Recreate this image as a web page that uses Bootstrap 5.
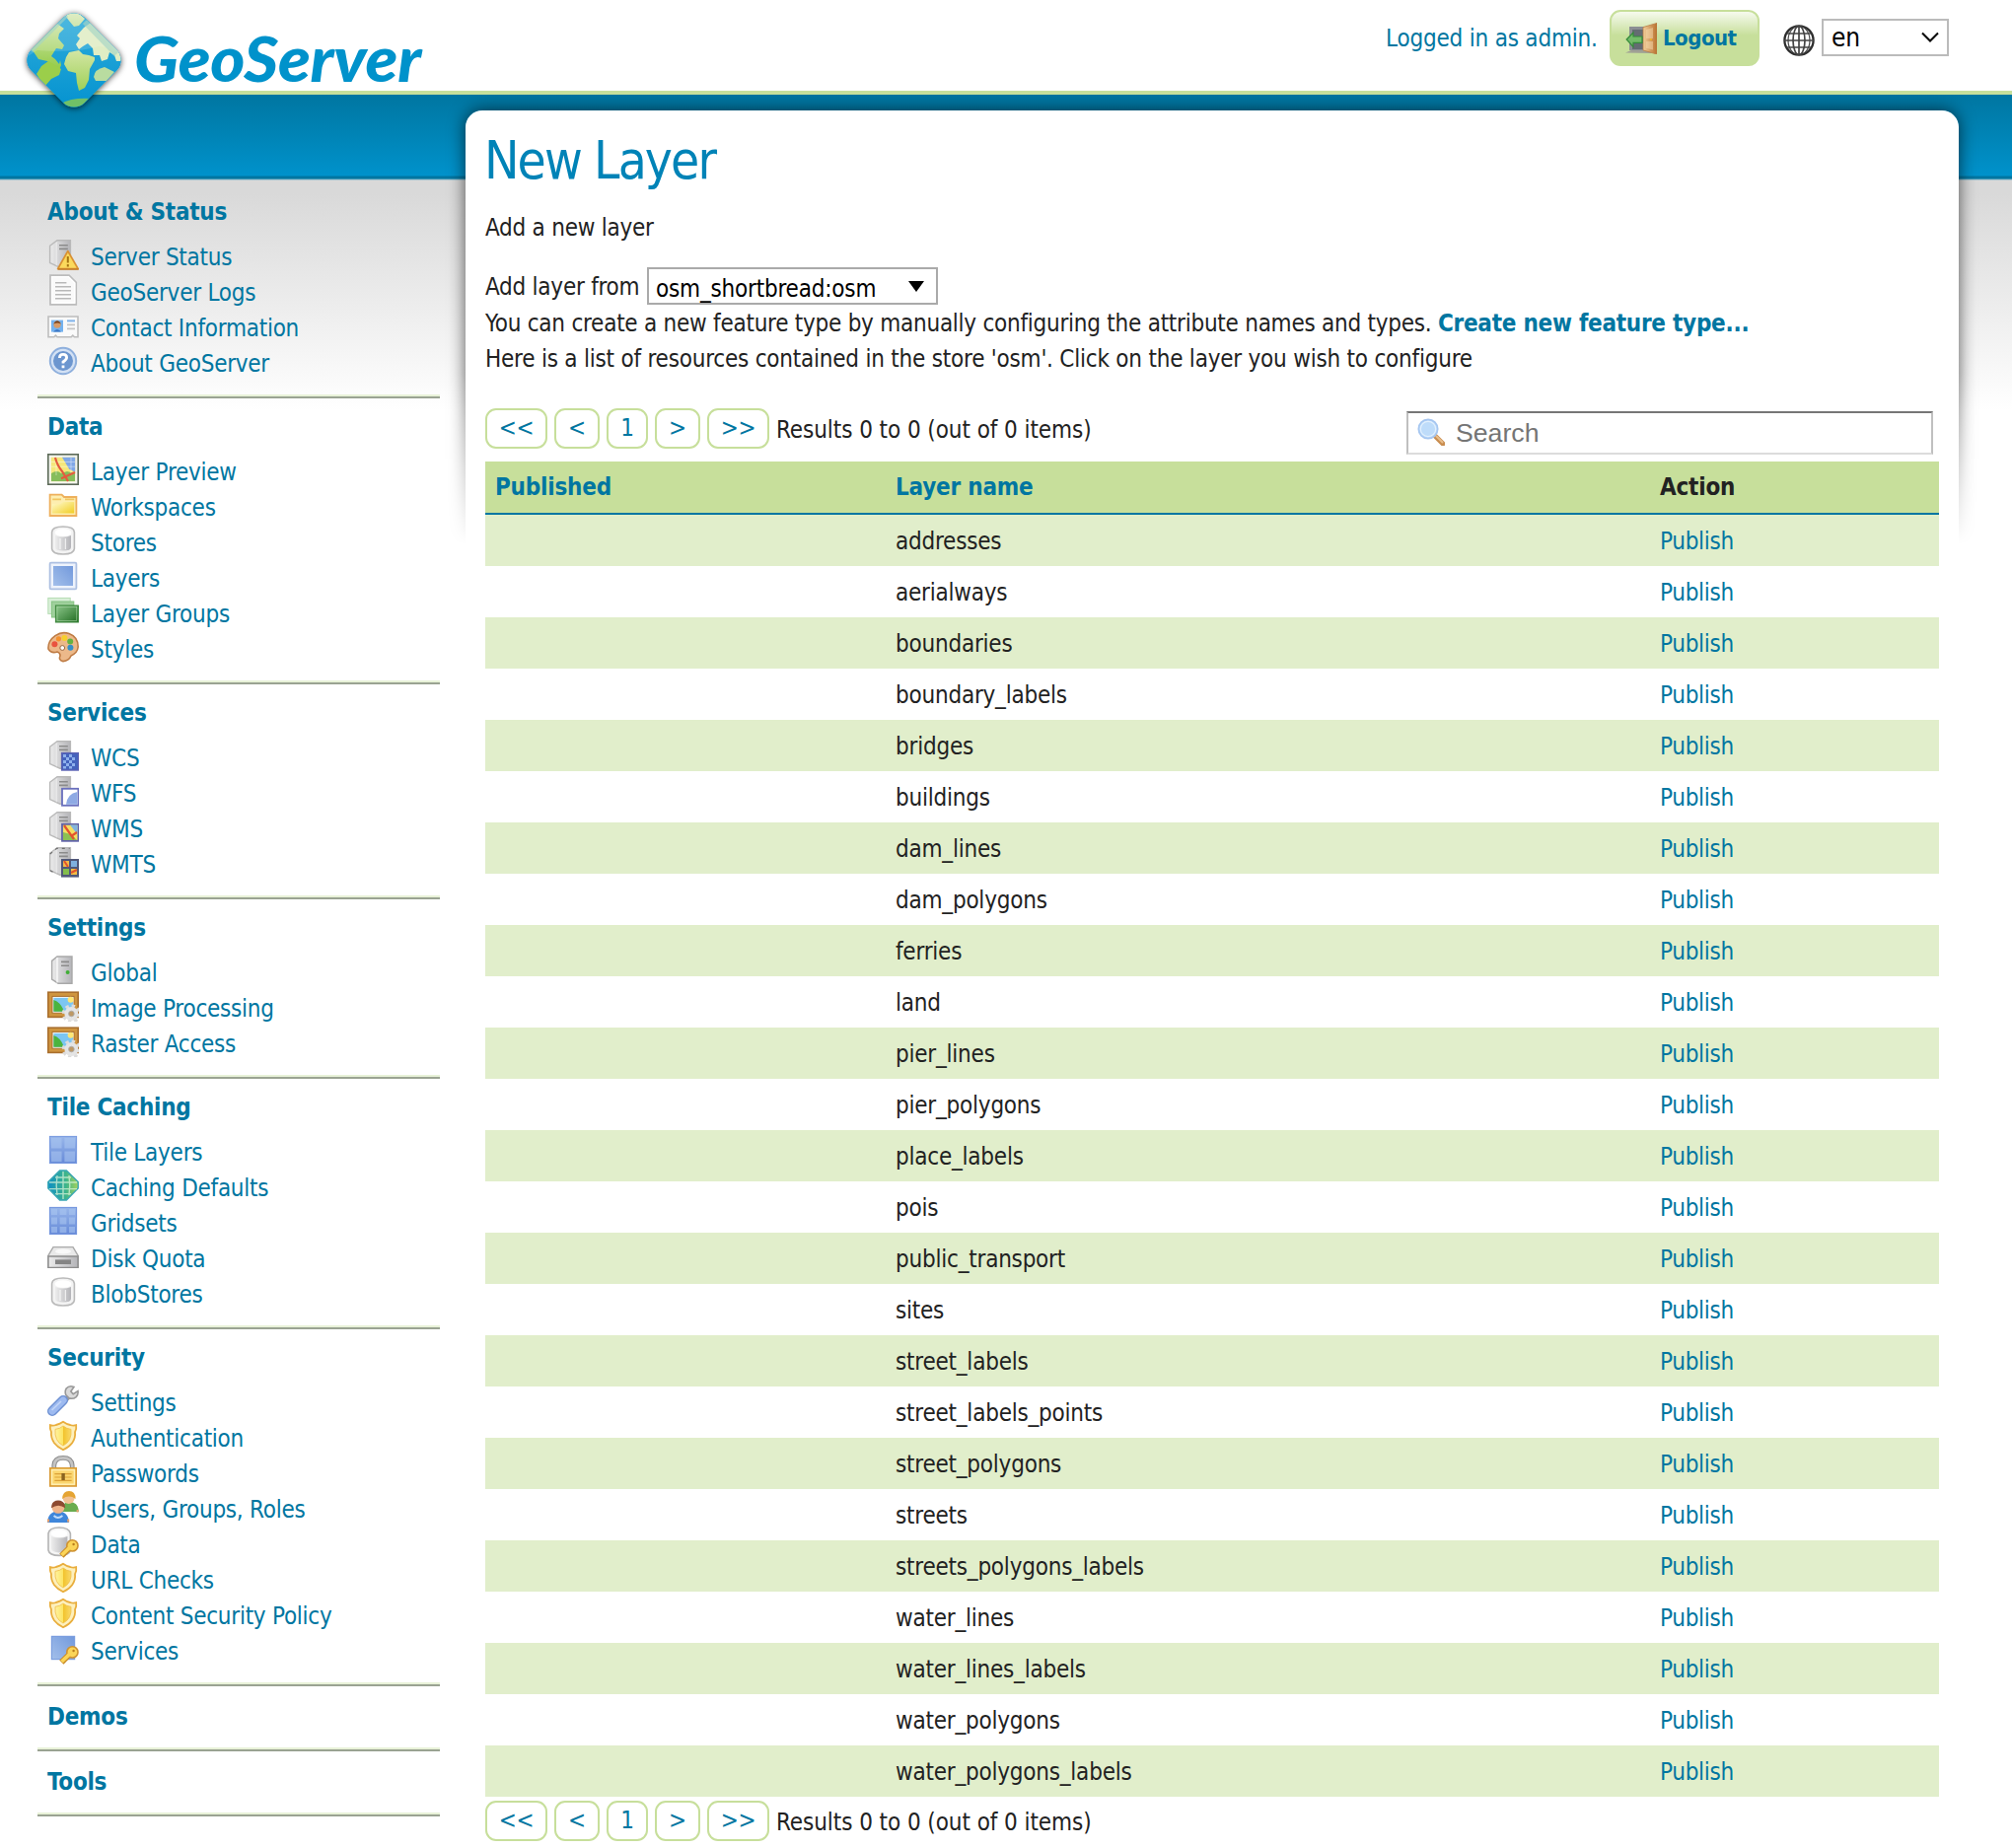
<!DOCTYPE html>
<html lang="en">
<head>
<meta charset="utf-8">
<title>GeoServer: New Layer</title>
<link href="https://cdn.jsdelivr.net/npm/bootstrap@5.3.0/dist/css/bootstrap.min.css" rel="stylesheet">
<style>
:root{--blue:#0076a1;--green:#c7df9b;--pale:#e1eecb}
body{font-family:"DejaVu Sans Condensed","DejaVu Sans",sans-serif;font-stretch:condensed;font-size:24px;line-height:36px;color:#222;background:#fff;letter-spacing:-.25px}
a{color:var(--blue);text-decoration:none}
a:hover{text-decoration:underline}
.top-bar{height:96px;border-bottom:4px solid var(--green)}
.logo{width:450px;height:120px;margin-bottom:-28px;position:relative;z-index:2}
.session{padding:10px 64px 0 0}
.who{width:227px;padding-top:11px;letter-spacing:-.2px}
.btn-logout{height:57px;width:152px;border:2px solid var(--green);border-radius:11px;background:linear-gradient(#f6faee,#c7df9b 45%);color:var(--blue);font-weight:700;font-size:22px;padding:0 0 0 14px;line-height:36px;letter-spacing:-.5px}
.btn-logout svg{margin-right:6px}
.globe{margin:15px 7px 0 24px}
.lang{width:129px;height:38px;border:2px solid #bbb;color:#000;padding:0 7px 0 8px;margin-top:9px;font-size:26px}
.store-row{height:39px}
.store-row>span{padding-top:2px;width:164px}
.store-pick{width:295px;height:38px;border:2px solid #aaa;color:#000;padding:2px 12px 0 7px;letter-spacing:-.2px}
.store-pick svg{margin-top:10px}
.stage{background:linear-gradient(#0076a1,#0092cb 82px,#0076a1 83px,#0076a1 85px,#7db4c9 86px,#d9d9d9 87px,#d9d9d9 100px,#fff 320px)}
.side{width:472px;padding:90px 26px 0 38px}
.side section{border-bottom:2px solid #9aa392;box-shadow:inset 0 -2px #e8f2d8;padding-bottom:15px}
.side h2{font-size:24px;line-height:36px;font-weight:700;color:var(--blue);margin:0;padding:11px 0 2px 10px;letter-spacing:-.25px}
.side h2:only-child{padding:13px 0 0 10px}
.side ul{margin:8px 0 0;padding:0 0 0 10px}
.side li{height:36px}
.side a{display:flex}
.side svg{width:32px;height:32px;margin:-1px 12px 0 0;flex:none}
.sheet{width:1514px;margin-top:16px;position:relative;padding:19px 20px 0}
.shade{position:absolute;inset:-16px -30px auto -30px;height:470px;overflow:hidden;-webkit-mask-image:linear-gradient(#000 60%,transparent 97%);mask-image:linear-gradient(#000 60%,transparent 97%)}
.shade::before{content:"";position:absolute;inset:16px 30px -40px;border-radius:17px;box-shadow:0 0 17px rgba(0,0,0,.65)}
.paper{position:absolute;inset:0;background:#fff;border-radius:17px 17px 0 0}
.inner{position:relative}
h1{font-size:52.8px;line-height:63px;color:#0083b7;font-weight:400;margin:0 0 19px -1px;letter-spacing:-1.9px}
.intro{margin:0 0 22px}
.hint{letter-spacing:-.22px}
.tools-row{height:54px;margin-top:32px}
.pager{height:41px}
.pager a{border:2px solid var(--green);border-radius:11px;height:41px;line-height:37px;text-align:center;margin-right:7px;background:#fff}
.pager .w63{width:63px}.pager .w46{width:46px}.pager .w42{width:42px}
.pager span{padding:4px 0 0;height:41px;letter-spacing:-.07px}
.find{width:534px;height:44px;border:2px solid;border-color:#767676 #c0c0c0 #dcdcdc;margin:3px 6px 0 0;color:#757575;font:26.67px/36px "Liberation Sans",sans-serif;padding:2px 9px;letter-spacing:0}
.find svg{margin:3px 11px 0 0}
.layers{width:1474px;table-layout:fixed;margin:0;border-collapse:separate;border-spacing:0}
.layers th,.layers td{height:52px;padding:2px 10px 0!important;border:0;line-height:36px;vertical-align:middle;color:#222;box-shadow:none!important}
.layers th{background:var(--green)!important;letter-spacing:-.2px}
.layers thead th{height:54px;border-bottom:2px solid var(--blue);padding-top:0!important}
.layers tbody tr:nth-child(odd) td{background:var(--pale)}
.layers tbody td{letter-spacing:-.22px}
.layers tbody td a{letter-spacing:-.3px}
</style>
<script src="https://cdn.jsdelivr.net/npm/bootstrap@5.3.0/dist/js/bootstrap.bundle.min.js"></script>
</head>
<body>
<svg width="0" height="0" class="position-absolute">
<defs>
<linearGradient id="gMetal"><stop offset="0" stop-color="#ececec"/><stop offset="1" stop-color="#b4b4b8"/></linearGradient>
<linearGradient id="gBlue" x1="1" y1="0" x2="0" y2="1"><stop offset="0" stop-color="#7299dc"/><stop offset="1" stop-color="#a3bfea"/></linearGradient>
<linearGradient id="gTile" x2="0" y2="1"><stop offset="0" stop-color="#98b6ea"/><stop offset="1" stop-color="#668ad8"/></linearGradient>
<linearGradient id="gGold"><stop offset="0" stop-color="#fff3a0"/><stop offset=".5" stop-color="#fce463"/><stop offset=".52" stop-color="#f2c32e"/><stop offset="1" stop-color="#f9d968"/></linearGradient>
<linearGradient id="gFold" x2="1" y2="1"><stop offset="0" stop-color="#fffbd0"/><stop offset="1" stop-color="#f1cd21"/></linearGradient>
<linearGradient id="gGreen" x2="1" y2="1"><stop offset="0" stop-color="#8fc98d"/><stop offset="1" stop-color="#1f6b20"/></linearGradient>
<linearGradient id="gGem"><stop offset="0" stop-color="#0d8fc4"/><stop offset=".6" stop-color="#3fb58a"/><stop offset="1" stop-color="#a6d35a"/></linearGradient>
<linearGradient id="gSea" x2="0" y2="1"><stop offset="0" stop-color="#35b0dc"/><stop offset="1" stop-color="#0090cf"/></linearGradient>
<linearGradient id="gLand" x2="0" y2="1"><stop offset="0" stop-color="#dcebbf"/><stop offset="1" stop-color="#93cb48"/></linearGradient>
<linearGradient id="gAfr" x2="0" y2="1"><stop offset="0" stop-color="#d3e6a4"/><stop offset="1" stop-color="#9fd058"/></linearGradient>
<linearGradient id="gDoor"><stop offset="0" stop-color="#f3cf9c"/><stop offset="1" stop-color="#b8702e"/></linearGradient>
<symbol id="srv" viewBox="0 0 16 16"><path d="M1.300 3.600 5 .9h6.700v13.700H6.400L1.300 12.300z" fill="url(#gMetal)" stroke="#b9b9b9" stroke-width=".7"/><path d="M4.600 1.700v12" stroke="#f6f6f6" stroke-width=".5" fill="none" opacity=".7"/><path d="M6 3.400h4.400M6 5.200h4.400" stroke="#8b8b8b" stroke-width=".8"/></symbol>
<symbol id="i-status" viewBox="0 0 16 16"><use href="#srv"/><path d="M10.400 6.300 15.600 15.300H5.300z" fill="#fbd95c" stroke="#d99134" stroke-width=".9" stroke-linejoin="round"/><path d="M5.400 15.500h10.400" stroke="#c27a28" stroke-width=".7"/><path d="M10.400 9v3.200M10.400 13v1.200" stroke="#a77513" stroke-width="1"/></symbol>
<symbol id="i-log" viewBox="0 0 16 16"><path d="M1.500.6H11l3.600 3.600v11.200H1.500z" fill="#fafafa" stroke="#bcbcbc" stroke-width=".9"/><path d="M2.300 1.300h8.400l3.200 3.200v10H2.300z" fill="none" stroke="#fff" stroke-width=".7"/><path d="M4 4.400h5.700M4 6.400h8M4 8.400h8M4 10.400h8M4 12.400h8" stroke="#b9b9b9" stroke-width=".8"/></symbol>
<symbol id="i-card" viewBox="0 0 16 16"><path d="M.5 3.500h15v10.400h-1.800l-.8-.8-.8.800H5l-.8-.8-.8.800H.5z" fill="#fafafa" stroke="#bdbdbd" stroke-width=".8"/><rect x="2" y="5.300" width="6" height="6" fill="#74b2ef"/><circle cx="5" cy="7.600" r="1.800" fill="#d89c68"/><path d="M3.100 7.300q1.900-3.400 3.900 0-1.900-1.200-3.900 0z" fill="#7a431d"/><path d="M3 11.300q2-2.600 4 0z" fill="#3d78c6"/><path d="M10 5.700h4" stroke="#7fb3ea" stroke-width="1"/><path d="M10 7.700h4M10 9.700h4" stroke="#c4c4c4" stroke-width=".8"/></symbol>
<symbol id="i-help" viewBox="0 0 16 16"><circle cx="8" cy="8" r="6.600" fill="#d3e1f4" stroke="#8fb0dd" stroke-width="1"/><circle cx="8" cy="8" r="5" fill="#6c96cf"/><path d="M6.200 6.500Q6.200 4.700 8 4.700t1.800 1.600Q9.800 7.300 8 8.500v.8M8 10.300v1.300" stroke="#fff" stroke-width="1.400" fill="none"/></symbol>
<symbol id="i-map" viewBox="0 0 16 16"><rect x=".4" y=".4" width="15.200" height="15.200" fill="#f4f5ee" stroke="#5d6b59" stroke-width=".8"/><rect x="1.900" y="1.900" width="12.200" height="12.200" fill="#f5e77a"/><path d="M7.500 1.900h6.600v7.500l-3-1.500z" fill="#7fa7e6"/><path d="M2 10q3-2 5 0l3-1 4 1v4H2z" fill="#87bd5b"/><path d="M2 4.200h12M2 6.600h12M4.500 2v9M12 2v9" stroke="#fff" stroke-width=".3" opacity=".7"/><path d="M4 2q1 4 3.500 7l3 5M7 12.600 14 9.500" stroke="#e35b3e" stroke-width="1.100" fill="none"/></symbol>
<symbol id="i-folder" viewBox="0 0 16 16"><path d="M1.300 13.500V2.800h6L8.500 4h6.200v9.500z" fill="#fdeeb0" stroke="#eeb05c" stroke-width=".9"/><path d="M2.500 12.300V7.600h4L8 6.500h5.600v5.800z" fill="url(#gFold)"/><path d="M2.600 5.200H7M9 5.200h4.600" stroke="#f2c660" stroke-width=".8"/></symbol>
<symbol id="i-cyl" viewBox="0 0 16 16"><path d="M2.300 3.800Q2.500 1 8 1t5.700 2.800v8.400Q13.500 15 8 15t-5.700-2.800z" fill="#f3f3f3" stroke="#b9b9b9" stroke-width=".8"/><path d="M4 5.500v6q0 1.800 4 1.800t4-1.800v-6q-4 1.600-8 0z" fill="url(#gMetal)"/><ellipse cx="8" cy="4" rx="4.200" ry="1.900" fill="#fff"/><path d="M6.500 7v5.500M9.200 7v5.500" stroke="#fff" stroke-width=".6" opacity=".7"/></symbol>
<symbol id="i-layer" viewBox="0 0 16 16"><rect x="1.300" y="1.300" width="13.400" height="13.400" rx=".6" fill="#eef3fc" stroke="#adc0e2" stroke-width=".9"/><rect x="3" y="3" width="10" height="10" fill="url(#gBlue)"/></symbol>
<symbol id="i-group" viewBox="0 0 16 16"><rect x=".4" y="1.200" width="11.200" height="8" fill="#d9efd8" stroke="#b5dcb3" stroke-width=".5"/><rect x="2.200" y="3" width="11.200" height="8" fill="#9fd09c" stroke="#84c281" stroke-width=".5"/><rect x="4.200" y="5" width="11.500" height="8.500" fill="url(#gGreen)" stroke="#3b853a" stroke-width=".5"/><rect x="5" y="5.800" width="9.900" height="6.900" fill="none" stroke="#a7d5a4" stroke-width=".3"/></symbol>
<symbol id="i-palette" viewBox="0 0 16 16"><path d="M.5 9Q.2 5 4 2.300 7.500 0 11 1.300 15.600 3 15.600 8 15.300 11 12 12.500 11 15 8 15.300 5.500 14.800 6.500 12.500 6.600 11 5 10.500 2 11.500.5 9z" fill="#ecb98a" stroke="#bf7c45" stroke-width=".8"/><circle cx="3.700" cy="6.600" r="1.500" fill="#e9533f"/><circle cx="5.700" cy="3.900" r="1.300" fill="#f5912d"/><circle cx="8.700" cy="3.500" r="1.500" fill="#f6cf2d"/><circle cx="11.600" cy="5.200" r="1.500" fill="#66b33f"/><circle cx="11.700" cy="8.400" r="1.500" fill="#378fc5"/><circle cx="7.600" cy="8.500" r="1.200" fill="#fff" stroke="#9b6840" stroke-width=".5"/></symbol>
<symbol id="i-wcs" viewBox="0 0 16 16"><use href="#srv"/><rect x="7.300" y="6.800" width="8.500" height="8.700" fill="#4463bd" stroke="#5b62b4" stroke-width=".7"/><path d="M8 7.500h1.500V9H8zm3 0h1.500V9H11zM9.500 9H11v1.500H9.500zm3 0H14v1.500h-1.500zM8 10.500h1.500V12H8zm3 0h1.500V12H11zM9.500 12H11v1.500H9.500zm3 0H14v1.500h-1.500zM8 13.500h1.500v1.300H8zm3 0h1.500v1.300H11z" fill="#8fb1ec"/></symbol>
<symbol id="i-wfs" viewBox="0 0 16 16"><use href="#srv"/><rect x="7.500" y="6.900" width="8.200" height="8.500" fill="#fff" stroke="#6a70bd" stroke-width=".9"/><path d="M9.500 14.900Q10 9.500 15.200 8.500v6.400z" fill="#8eaae4"/></symbol>
<symbol id="i-wms" viewBox="0 0 16 16"><use href="#srv"/><rect x="7.500" y="6.900" width="8.200" height="8.500" fill="#f5df62" stroke="#5f62a8" stroke-width=".9"/><path d="M11.500 7.300h3.800v5z" fill="#82b4df"/><path d="M8 15v-4l4 1 3 3z" fill="#8cc152"/><path d="m8.500 7.500 5 7M12 13l3-2" stroke="#e2532d" stroke-width="1.100"/></symbol>
<symbol id="i-wmts" viewBox="0 0 16 16"><use href="#srv"/><path d="M1.400 4 4.800 1.200h6.500M1.400 12.400l3 1.500" fill="none" stroke="#6f6f6f" stroke-width=".6" stroke-dasharray="1.500 2"/><rect x="7" y="6.500" width="9" height="9.300" fill="#505779"/><path d="M8 7.500h3v3H8z" fill="#f3b94a"/><path d="M12 7.500h3v3h-3z" fill="#7fb0df"/><path d="M8 11.500h3v3H8z" fill="#83bd4c"/><path d="M12 11.500h3v3h-3z" fill="#f3bd43"/><path d="m8.500 7.500 2 3M12 13.500l3-1.500" stroke="#e2532d"/></symbol>
<symbol id="i-global" viewBox="0 0 16 16"><path d="M2.300 3.200 5 1h7.500v13.600H5.500l-3.200-2z" fill="url(#gMetal)" stroke="#a9a9a9" stroke-width=".7"/><path d="M5 1.500v12.700" stroke="#fff" stroke-width=".6"/><path d="M7 3.700h4M7 5.600h4" stroke="#8b8b8b" stroke-width=".8"/><circle cx="10.300" cy="9" r="1" fill="#3fae35"/></symbol>
<symbol id="i-image" viewBox="0 0 16 16"><rect x=".4" y="1.100" width="15.200" height="12.600" fill="#cf953f" stroke="#a96f2e" stroke-width=".8"/><rect x="2.500" y="3.200" width="11" height="8.400" fill="#fff" stroke="#a96f2e" stroke-width=".5"/><rect x="3.200" y="3.900" width="9.800" height="7" fill="#7cc6f2"/><path d="M3.200 5q3.500 1 5.300 5.900H3.200z" fill="#4bb43e"/><circle cx="11.800" cy="4.900" r="1.500" fill="#ffe775"/><circle cx="12.200" cy="12" r="4" fill="none" stroke="#dcdcdc" stroke-width="1.600" stroke-dasharray="1.700 1.440"/><circle cx="12.200" cy="12" r="3.500" fill="#e4e4e4"/><circle cx="12.200" cy="12" r="1.400" fill="#bd9865" stroke="#aaa" stroke-width=".4"/></symbol>
<symbol id="i-tile" viewBox="0 0 16 16"><rect x="1.200" y="1.200" width="13.600" height="13.600" fill="url(#gTile)" stroke="#7698df" stroke-width=".5"/><path d="M2 2h5.300v5.300H2zM8.700 2H14v5.300H8.700zM2 8.700h5.300V14H2zM8.700 8.700H14V14H8.700z" fill="#a9c5f0" opacity=".6"/></symbol>
<symbol id="i-gem" viewBox="0 0 16 16"><path d="M6.300.5h3.400L15.600 6.300v3.200L9.700 15.500H6.300L.4 9.500V6.300z" fill="url(#gGem)" stroke="#3aa7b4" stroke-width=".7"/><path d="M5 3Q4.200 8 5 13M8 1v14M11 3q.8 5 0 10M1 6.500h14M1 9.800h14M4 4h8M4 12.300h8" stroke="#d7f3d8" stroke-width=".7" fill="none" opacity=".75"/></symbol>
<symbol id="i-grid" viewBox="0 0 16 16"><rect x="1.200" y="1.200" width="13.600" height="13.600" fill="url(#gTile)" stroke="#6f93dd" stroke-width=".5"/><path d="M2 2h3v3H2zM6.300 2h3.400v3H6.300zM11 2h3v3h-3zM2 6.300h3v3.400H2zM6.300 6.300h3.400v3.400H6.300zM11 6.300h3v3.400h-3zM2 11h3v3H2zM6.300 11h3.400v3H6.300zM11 11h3v3h-3z" fill="#a9c5f0" opacity=".6"/></symbol>
<symbol id="i-disk" viewBox="0 0 16 16"><path d="M3 3.300h10l2.600 4.400v6H.4v-6z" fill="#e9e9e9" stroke="#aaa" stroke-width=".7"/><path d="M.5 8h15v5.700H.5z" fill="url(#gMetal)" stroke="#8d8d8d" stroke-width=".7"/><rect x="4" y="9.700" width="8" height="2.300" fill="#858585"/><ellipse cx="8" cy="5.500" rx="4" ry="1.300" fill="#f9f9f9"/></symbol>
<symbol id="i-wrench" viewBox="0 0 16 16"><path d="M8 9 11 6" stroke="#9b9b9b" stroke-width="2.600"/><path d="M13.500 1.200Q11 .3 9.600 2q-.9 1.500-.2 3.300l1.600 1.600q2 .7 3.600-.6 1.200-1.200.9-3l-2.400 1.500-1.200-1.300z" fill="#dadada" stroke="#999" stroke-width=".8"/><path d="M2.500 13.500 8 8" stroke="#6d90d2" stroke-width="5" stroke-linecap="round"/><path d="M2.500 13.500 8 8" stroke="#9dbaf0" stroke-width="3.600" stroke-linecap="round"/><path d="M2.300 13 7 8.500" stroke="#c3d6f7" stroke-width=".8"/></symbol>
<symbol id="i-shield" viewBox="0 0 16 16"><path d="M1.400 2.600q1.400.5 3-.1Q6.500 2 8 .9q1.700 1.200 3.600 1.600 1.600.5 3 .1.300 2-.6 3.500.4 3-1.400 5.500-1.500 2-4.600 3.500-3-1.500-4.500-3.500Q1.700 9 2 6.100 1.200 4.500 1.400 2.600z" fill="#fdf0bd" stroke="#e9ae3d" stroke-width=".9"/><path d="M4 4.700q2.500-.3 4-1.700 1.700 1.400 4 1.700.6 6-4 8.300-4.500-2.300-4-8.300z" fill="url(#gGold)" stroke="#f0bf4b" stroke-width=".4"/></symbol>
<symbol id="i-lock" viewBox="0 0 16 16"><path d="M3.400 7V5Q3.700 1.200 8 1.200T12.600 5v2" fill="none" stroke="#8f8f8f" stroke-width="2.400"/><path d="M3.400 7V5Q3.700 1.200 8 1.200T12.600 5v2" fill="none" stroke="#c4c4c4" stroke-width="1.300"/><rect x="1.400" y="6.400" width="13.200" height="9.100" fill="#fbd66f" stroke="#d99a35" stroke-width=".8"/><rect x="2.300" y="7.300" width="11.400" height="7.300" fill="none" stroke="#fff0b5" stroke-width=".7"/><path d="M3.700 9.300h8.600M3.700 11h8.600M3.700 12.700h8.600" stroke="#dba136" stroke-width=".6"/><rect x="7.200" y="9" width="1.700" height="3.500" fill="#8a6420"/></symbol>
<symbol id="i-users" viewBox="0 0 16 16"><path d="M7.200 10.500q.3-5 3.800-5 4.700 0 4.900 5z" fill="#69ac4f"/><circle cx="10.800" cy="3.500" r="3" fill="#f1c193"/><path d="M7.600 4Q7.700 0 11 0t3.300 4q-3.300-2.400-6.700 0z" fill="#e5a433"/><path d="M0 16Q.4 10.200 5.500 10.200T11 16z" fill="#3f86da"/><circle cx="5.500" cy="8.200" r="3.200" fill="#efb48a"/><path d="M2 8.600Q2.100 4.700 5.500 4.700T9.100 8.600q-3.500-2.500-7.100 0z" fill="#8d4a30"/><path d="M3.300 12.500q2 2 4.400 0" stroke="#c1dcfa" fill="none"/><path d="M.5 14.300v1.500M10.600 14.300v1.500M15.300 9.500v1.300" stroke="#e8a06c"/></symbol>
<symbol id="key" viewBox="0 0 16 16"><path d="M7.200 14.800 11 11" stroke="#c98b24" stroke-width="3"/><circle cx="12.700" cy="9.700" r="2.800" fill="#fbd558" stroke="#cf9230" stroke-width=".8"/><path d="M7.300 14.500 12 10" stroke="#fbd558" stroke-width="1.900"/><circle cx="13.300" cy="9" r=".6" fill="#b97c1d"/></symbol>
<symbol id="i-datakey" viewBox="0 0 16 16"><path d="M.5 3.500Q1 .5 6 .5t5.700 3v8.600Q11 14.700 6 14.700T.5 12z" fill="#f5f5f5" stroke="#b4b4b4" stroke-width=".8"/><path d="M2 5v6.300q.5 1.900 4 1.900t4.200-1.900V5q-4 1.600-8.200 0z" fill="url(#gMetal)"/><ellipse cx="6" cy="3.500" rx="4.200" ry="1.900" fill="#fff"/><use href="#key"/></symbol>
<symbol id="i-svckey" viewBox="0 0 16 16"><rect x="2.200" y="1.700" width="11.600" height="11.600" fill="url(#gBlue)" stroke="#7b9edf" stroke-width=".6"/><use href="#key"/></symbol>
</defs>
</svg>

<header class="top-bar d-flex justify-content-between align-items-start">
<svg class="logo" viewBox="0 0 450 120" role="img" aria-label="GeoServer">
<defs><clipPath id="gemClip"><rect x="37" y="23" width="76" height="76" rx="15" transform="rotate(45 75 61)"/></clipPath><filter id="soft" x="-20%" y="-20%" width="140%" height="140%"><feDropShadow dx="0" dy="1" stdDeviation="3" flood-opacity=".75"/></filter></defs>
<g filter="url(#soft)"><rect x="37" y="23" width="76" height="76" rx="15" transform="rotate(45 75 61)" fill="#0b9ad2"/></g>
<g clip-path="url(#gemClip)">
<path d="M20 0h110v120H20z" fill="url(#gSea)"/>
<path d="M68 12q10-2 18 7l-6 7-5 1-5-6-3-4zM30 50 58 24l7 5-5 5-1 5 6 7-2 4-6-1-5 8 4 3 4 5 1-4 1 5-2 5-5-3-7-6-9-2-6-9z" fill="url(#gLand)"/>
<path d="M49 62l7 4 6 4-2 6-8 4-7 8-8-13 5-8z" fill="#9bce4a"/>
<path d="M85 28l7-5 35 34-5 5-4 0-2-6-5-3-2 7-6 2-2-6-6 0-1-7-5-5-5 3-4 3-3-5 4-6-3-3z" fill="#e0edc4"/>
<path d="M70 53l10-2 4 4 6 1 6 2 0 3-5 9-1 11-4 8-6 3-2-8-1-10-8-2-4-7 2-7z" fill="url(#gAfr)"/>
<path d="M95 78q1-8 11-10l10 5-8 9-11 0z" fill="#b9dca0"/>
<path d="M62 105q10-6 30-5l-4 9H66z" fill="#71c067"/>
<path d="M20 62 75 8l55 54q-18-15-30-15-22 7-62 4z" fill="#fff" opacity=".14"/><path d="m31 51 36-36M118 55 86 22" stroke="#a5d4c5" stroke-width="6" opacity=".65"/>
</g>
<text x="136" y="83" textLength="291" lengthAdjust="spacingAndGlyphs" font-family="Lato,sans-serif" font-style="italic" font-weight="900" font-size="62" fill="#0092cb">GeoServer</text>
</svg>
<div class="session d-flex align-items-start">
<a href="#" class="who">Logged in as admin.</a>
<button class="btn btn-logout d-flex align-items-center"><svg width="32" height="32" viewBox="0 0 16 16"><path d="M2 2h8v12H2z" fill="#8b8e93"/><path d="M3.500 3.500h6v10h-6z" fill="#646b72"/><path d="M0 15.200 3 14h10v1.500z" fill="#a0a095"/><path d="M9 2.300 16 .2V16l-7-2z" fill="url(#gDoor)" stroke="#b97b42" stroke-width=".4"/><path d="m10.500 3.500 3.500-1v5.500h-3.500zM10.500 9.500H14v4.200l-3.500-.8z" fill="#f6d9ae" opacity=".5"/><circle cx="13" cy="8.500" r=".5" fill="#f5b61e"/><path d="M.6 8.500 4 5v2h4.500v3.200H4v2z" fill="#73ba69" stroke="#348a39" stroke-width=".6"/></svg>Logout</button>
<svg class="globe" width="32" height="32" viewBox="0 0 32 32" fill="none" stroke="#444" stroke-width="1.700"><circle cx="16" cy="16" r="14.600" stroke="#2c2c2c" stroke-width="2.300"/><path d="M16 1v30M1 16h30M3.500 9h25M3.500 23h25"/><ellipse cx="16" cy="16" rx="6" ry="14.500"/><ellipse cx="16" cy="16" rx="11" ry="14.500" stroke-width="1.200"/></svg>
<div class="lang d-flex justify-content-between align-items-center">en<svg width="20" height="12" viewBox="0 0 20 12"><path d="m2 1.500 8 8 8-8" stroke="#000" stroke-width="2" fill="none"/></svg></div>
</div>
</header>

<div class="stage d-flex align-items-start">
<nav class="side flex-shrink-0">
<section><h2>About &amp; Status</h2><ul class="list-unstyled">
<li><a href="#"><svg><use href="#i-status"/></svg>Server Status</a></li>
<li><a href="#"><svg><use href="#i-log"/></svg>GeoServer Logs</a></li>
<li><a href="#"><svg><use href="#i-card"/></svg>Contact Information</a></li>
<li><a href="#"><svg><use href="#i-help"/></svg>About GeoServer</a></li></ul></section>
<section><h2>Data</h2><ul class="list-unstyled">
<li><a href="#"><svg><use href="#i-map"/></svg>Layer Preview</a></li>
<li><a href="#"><svg><use href="#i-folder"/></svg>Workspaces</a></li>
<li><a href="#"><svg><use href="#i-cyl"/></svg>Stores</a></li>
<li><a href="#"><svg><use href="#i-layer"/></svg>Layers</a></li>
<li><a href="#"><svg><use href="#i-group"/></svg>Layer Groups</a></li>
<li><a href="#"><svg><use href="#i-palette"/></svg>Styles</a></li></ul></section>
<section><h2>Services</h2><ul class="list-unstyled">
<li><a href="#"><svg><use href="#i-wcs"/></svg>WCS</a></li>
<li><a href="#"><svg><use href="#i-wfs"/></svg>WFS</a></li>
<li><a href="#"><svg><use href="#i-wms"/></svg>WMS</a></li>
<li><a href="#"><svg><use href="#i-wmts"/></svg>WMTS</a></li></ul></section>
<section><h2>Settings</h2><ul class="list-unstyled">
<li><a href="#"><svg><use href="#i-global"/></svg>Global</a></li>
<li><a href="#"><svg><use href="#i-image"/></svg>Image Processing</a></li>
<li><a href="#"><svg><use href="#i-image"/></svg>Raster Access</a></li></ul></section>
<section><h2>Tile Caching</h2><ul class="list-unstyled">
<li><a href="#"><svg><use href="#i-tile"/></svg>Tile Layers</a></li>
<li><a href="#"><svg><use href="#i-gem"/></svg>Caching Defaults</a></li>
<li><a href="#"><svg><use href="#i-grid"/></svg>Gridsets</a></li>
<li><a href="#"><svg><use href="#i-disk"/></svg>Disk Quota</a></li>
<li><a href="#"><svg><use href="#i-cyl"/></svg>BlobStores</a></li></ul></section>
<section><h2>Security</h2><ul class="list-unstyled">
<li><a href="#"><svg><use href="#i-wrench"/></svg>Settings</a></li>
<li><a href="#"><svg><use href="#i-shield"/></svg>Authentication</a></li>
<li><a href="#"><svg><use href="#i-lock"/></svg>Passwords</a></li>
<li><a href="#"><svg><use href="#i-users"/></svg>Users, Groups, Roles</a></li>
<li><a href="#"><svg><use href="#i-datakey"/></svg>Data</a></li>
<li><a href="#"><svg><use href="#i-shield"/></svg>URL Checks</a></li>
<li><a href="#"><svg><use href="#i-shield"/></svg>Content Security Policy</a></li>
<li><a href="#"><svg><use href="#i-svckey"/></svg>Services</a></li></ul></section>
<section><h2>Demos</h2></section>
<section><h2>Tools</h2></section>
</nav>

<main class="sheet flex-shrink-0">
<div class="shade"></div><div class="paper"></div>
<div class="inner">
<h1>New Layer</h1>
<p class="intro">Add a new layer</p>
<div class="store-row d-flex"><span>Add layer from</span><div class="store-pick d-flex justify-content-between"><span>osm_shortbread:osm</span><svg width="16" height="11" viewBox="0 0 16 11"><path d="M0 0h16L8 11z"/></svg></div></div>
<div class="text-nowrap">You can create a new feature type by manually configuring the attribute names and types. <a href="#" class="fw-bold">Create new feature type...</a></div>
<div class="hint">Here is a list of resources contained in the store 'osm'. Click on the layer you wish to configure</div>
<div class="tools-row d-flex justify-content-between align-items-start">
<div class="pager d-flex"><a href="#" class="w63">&lt;&lt;</a><a href="#" class="w46">&lt;</a><a href="#" class="w42">1</a><a href="#" class="w46">&gt;</a><a href="#" class="w63">&gt;&gt;</a><span>Results 0 to 0 (out of 0 items)</span></div>
<div class="find d-flex"><svg width="28" height="28" viewBox="0 0 28 28"><path d="m18 18 8 8" stroke="#c98d50" stroke-width="5" stroke-linecap="round"/><path d="m19 18 7 7" stroke="#e9be8b" stroke-width="2"/><circle cx="11" cy="11" r="9.700" fill="#bedcfa" stroke="#a6c6f0" stroke-width="1.700"/><circle cx="11" cy="11" r="7.700" fill="none" stroke="#e3f0fd" stroke-width="1.200"/></svg>Search</div>
</div>
<table class="table layers">
<colgroup><col style="width:406px"><col style="width:775px"><col></colgroup>
<thead><tr><th><a href="#">Published</a></th><th><a href="#">Layer name</a></th><th>Action</th></tr></thead>
<tbody>
<tr><td></td><td>addresses</td><td><a href="#">Publish</a></td></tr>
<tr><td></td><td>aerialways</td><td><a href="#">Publish</a></td></tr>
<tr><td></td><td>boundaries</td><td><a href="#">Publish</a></td></tr>
<tr><td></td><td>boundary_labels</td><td><a href="#">Publish</a></td></tr>
<tr><td></td><td>bridges</td><td><a href="#">Publish</a></td></tr>
<tr><td></td><td>buildings</td><td><a href="#">Publish</a></td></tr>
<tr><td></td><td>dam_lines</td><td><a href="#">Publish</a></td></tr>
<tr><td></td><td>dam_polygons</td><td><a href="#">Publish</a></td></tr>
<tr><td></td><td>ferries</td><td><a href="#">Publish</a></td></tr>
<tr><td></td><td>land</td><td><a href="#">Publish</a></td></tr>
<tr><td></td><td>pier_lines</td><td><a href="#">Publish</a></td></tr>
<tr><td></td><td>pier_polygons</td><td><a href="#">Publish</a></td></tr>
<tr><td></td><td>place_labels</td><td><a href="#">Publish</a></td></tr>
<tr><td></td><td>pois</td><td><a href="#">Publish</a></td></tr>
<tr><td></td><td>public_transport</td><td><a href="#">Publish</a></td></tr>
<tr><td></td><td>sites</td><td><a href="#">Publish</a></td></tr>
<tr><td></td><td>street_labels</td><td><a href="#">Publish</a></td></tr>
<tr><td></td><td>street_labels_points</td><td><a href="#">Publish</a></td></tr>
<tr><td></td><td>street_polygons</td><td><a href="#">Publish</a></td></tr>
<tr><td></td><td>streets</td><td><a href="#">Publish</a></td></tr>
<tr><td></td><td>streets_polygons_labels</td><td><a href="#">Publish</a></td></tr>
<tr><td></td><td>water_lines</td><td><a href="#">Publish</a></td></tr>
<tr><td></td><td>water_lines_labels</td><td><a href="#">Publish</a></td></tr>
<tr><td></td><td>water_polygons</td><td><a href="#">Publish</a></td></tr>
<tr><td></td><td>water_polygons_labels</td><td><a href="#">Publish</a></td></tr>
</tbody></table>
<div class="pager d-flex mt-1"><a href="#" class="w63">&lt;&lt;</a><a href="#" class="w46">&lt;</a><a href="#" class="w42">1</a><a href="#" class="w46">&gt;</a><a href="#" class="w63">&gt;&gt;</a><span>Results 0 to 0 (out of 0 items)</span></div>
</div>
</main>
</div>
</body>
</html>
